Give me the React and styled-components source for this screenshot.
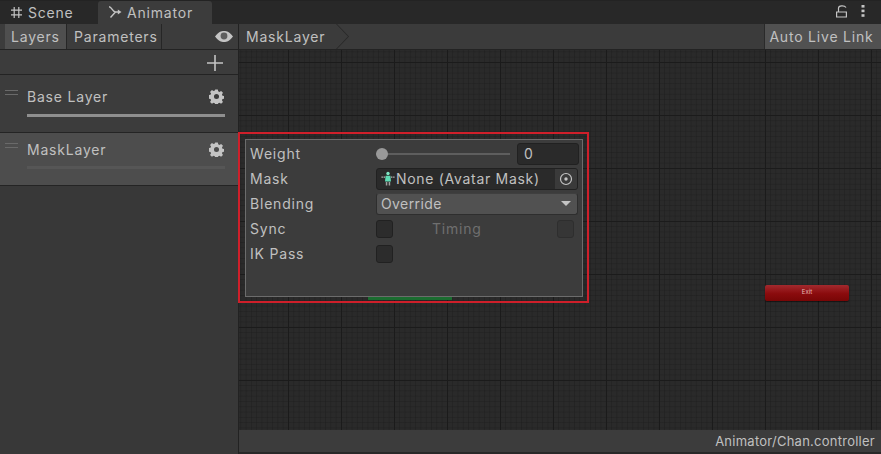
import React from 'react';
import styled, { createGlobalStyle } from 'styled-components';

const Global = createGlobalStyle`
  html, body { margin: 0; padding: 0; background: #282828; }
  body { font-family: Inter, "Liberation Sans", sans-serif; }
`;

const Window = styled.div`
  width: 881px;
  height: 454px;
  display: flex;
  flex-direction: column;
  overflow: hidden;
  color: #c0c0c0;
  font-size: 14px;
  letter-spacing: 0.8px;
`;

const TabBar = styled.div`
  height: 24px;
  flex: none;
  display: flex;
  background: #282828;
  box-sizing: border-box;
  border-top: 1px solid #232323;
`;

const Tab = styled.div`
  display: flex;
  align-items: center;
  gap: 5px;
  height: 23px;
  box-sizing: border-box;
  padding: ${(p) => (p.$active ? '0 0 0 11px' : '0 0 0 10px')};
  width: ${(p) => p.$w}px;
  background: ${(p) => (p.$active ? '#3c3c3c' : 'transparent')};
  border-radius: 3px 3px 0 0;
  margin-left: ${(p) => (p.$active ? 0 : 0)}px;
`;

const TabTools = styled.div`
  margin-left: auto;
  display: flex;
  align-items: center;
  gap: 14px;
  padding-right: 16px;
  height: 20px;
`;

const Body = styled.div`
  flex: 1;
  display: flex;
  min-height: 0;
`;

const Side = styled.div`
  width: 239px;
  flex: none;
  display: flex;
  flex-direction: column;
  background: #383838;
  border-right: 1px solid #222;
  box-sizing: border-box;
`;

const SideTabs = styled.div`
  height: 26px;
  flex: none;
  display: flex;
  background: #3c3c3c;
  border-bottom: 1px solid #232323;
  box-sizing: border-box;
  padding-left: 5px;
  align-items: stretch;
`;

const SideTab = styled.div`
  display: flex;
  align-items: center;
  padding-left: ${(p) => (p.$active ? 6 : 7)}px;
  width: ${(p) => p.$w}px;
  background: ${(p) => (p.$active ? '#4f4f4f' : '#3c3c3c')};
  border-right: 1px solid #262626;
  box-sizing: border-box;
`;

const EyeWrap = styled.div`
  margin-left: auto;
  display: flex;
  align-items: center;
  padding-right: 5px;
`;

const AddRow = styled.div`
  height: 25px;
  flex: none;
  display: flex;
  align-items: center;
  justify-content: flex-end;
  padding: 1px 15px 0 0;
  background: #3c3c3c;
  border-bottom: 1px solid #232323;
  box-sizing: border-box;
`;

const LayerRow = styled.div`
  height: ${(p) => (p.$selected ? 53 : 58)}px;
  flex: none;
  position: relative;
  box-sizing: border-box;
  padding: ${(p) => (p.$selected ? 6 : 11)}px 14px 0 27px;
  background: ${(p) => (p.$selected ? '#4d4d4d' : '#3c3c3c')};
  border-bottom: 1px solid #242424;
`;

const Grip = styled.div`
  position: absolute;
  left: 5px;
  top: ${(p) => (p.$selected ? 10 : 15)}px;
  width: 13px;
  height: 3px;
  border-top: 1px solid #6a6a6a;
  border-bottom: 1px solid #6a6a6a;
`;

const LayerHead = styled.div`
  display: flex;
  align-items: center;
  justify-content: space-between;
  height: 20px;
`;

const LayerBar = styled.div`
  margin-top: ${(p) => (p.$dim ? 7 : 8)}px;
  height: 3px;
  margin-right: -1px;
  background: ${(p) => (p.$dim ? '#565656' : '#8f8f8f')};
`;

const SideFill = styled.div`
  flex: 1;
  background: #383838;
`;

const Main = styled.div`
  flex: 1;
  min-width: 0;
  display: flex;
  flex-direction: column;
`;

const Crumbs = styled.div`
  height: 26px;
  flex: none;
  display: flex;
  background: #3b3b3b;
  border-bottom: 1px solid #232323;
  box-sizing: border-box;
`;

const Crumb = styled.div`
  position: relative;
  display: flex;
  align-items: center;
  padding-left: 7px;
  width: 97px;
  box-sizing: border-box;

  &::after {
    content: '';
    position: absolute;
    left: 97px;
    top: 0;
    width: 13px;
    height: 100%;
    background: #272727;
    clip-path: polygon(0 0, 1px 0, 13px 50%, 1px 100%, 0 100%, 12px 50%);
  }
`;

const LiveLink = styled.div`
  margin-left: auto;
  width: 117px;
  box-sizing: border-box;
  display: flex;
  align-items: center;
  justify-content: center;
  padding-right: 3px;
  background: #515151;
  border-left: 1px solid #2a2a2a;
`;

const Canvas = styled.div`
  flex: 1;
  min-height: 0;
  position: relative;
  background-color: #2a2a2a;
  background-image:
    linear-gradient(to right, #1b1b1b 1px, transparent 1px),
    linear-gradient(to bottom, #1b1b1b 1px, transparent 1px),
    linear-gradient(to right, rgba(28, 28, 28, 0.4) 1px, transparent 1px),
    linear-gradient(to bottom, rgba(28, 28, 28, 0.4) 1px, transparent 1px);
  background-size: 53px 53px, 53px 53px, 5.3px 5.3px, 5.3px 5.3px;
  background-position: 49px 12px, 49px 12px, 49px 12px, 49px 12px;
`;

const Outline = styled.div`
  position: absolute;
  left: -1px;
  top: 82px;
  width: 351px;
  height: 171px;
  box-sizing: border-box;
  border: 2px solid #cf1f2a;
  padding: 5px 4px 4px 5px;
`;

const Popup = styled.div`
  width: 100%;
  height: 100%;
  box-sizing: border-box;
  position: relative;
  background: #3c3c3c;
  border: 1px solid #6c6c6c;
  padding: 1px 3px 0 4px;
  display: flex;
  flex-direction: column;
`;

const Prop = styled.div`
  height: 25px;
  flex: none;
  display: grid;
  grid-template-columns: 126px 1fr;
  align-items: center;
`;

const Control = styled.div`
  display: flex;
  align-items: center;
  min-width: 0;
`;

const Slider = styled.div`
  flex: none;
  width: 134px;
  height: 2px;
  margin-right: 7px;
  position: relative;
  background: #5e5e5e;
`;

const Thumb = styled.div`
  position: absolute;
  left: 0;
  top: -5px;
  width: 12px;
  height: 12px;
  border-radius: 50%;
  background: #999;
`;

const NumberField = styled.div`
  flex: 1;
  height: 22px;
  box-sizing: border-box;
  background: #2a2a2a;
  border: 1px solid #212121;
  border-radius: 3px;
  padding-left: 6px;
  display: flex;
  align-items: center;
`;

const ObjectField = styled.div`
  flex: 1;
  height: 22px;
  margin-right: 1px;
  box-sizing: border-box;
  background: #2a2a2a;
  border: 1px solid #212121;
  border-radius: 3px;
  display: flex;
  align-items: center;
  padding-left: 4px;
  gap: 1px;
  white-space: nowrap;
  letter-spacing: 0.7px;
`;

const Picker = styled.div`
  margin-left: auto;
  width: 22px;
  height: 20px;
  flex: none;
  display: flex;
  align-items: center;
  justify-content: center;
  background: #3a3a3a;
  border-radius: 0 2px 2px 0;
`;

const Dropdown = styled.div`
  flex: 1;
  height: 22px;
  margin-right: 1px;
  box-sizing: border-box;
  background: #515151;
  border: 1px solid #2e2e2e;
  border-top-color: #3f3f3f;
  border-radius: 3px;
  padding: 0 6px 0 4px;
  display: flex;
  align-items: center;
  justify-content: space-between;
  letter-spacing: 0.4px;
`;

const Caret = styled.div`
  width: 0;
  height: 0;
  border-left: 5px solid transparent;
  border-right: 5px solid transparent;
  border-top: 5px solid #c4c4c4;
`;

const Check = styled.div`
  width: 17px;
  height: 18px;
  flex: none;
  box-sizing: border-box;
  background: ${(p) => (p.$dim ? '#363636' : '#2c2c2c')};
  border: 1px solid ${(p) => (p.$dim ? '#2e2e2e' : '#212121')};
  border-radius: 3px;
`;

const Timing = styled.span`
  margin-left: 39px;
  color: #6f6f6f;
`;

const SyncEnd = styled.div`
  margin-left: auto;
  margin-right: 5px;
`;

const GreenBar = styled.div`
  position: absolute;
  left: 122px;
  bottom: -4px;
  width: 84px;
  height: 3px;
  background: #1b6c30;
`;

const ExitNode = styled.div`
  position: absolute;
  left: 526px;
  top: 235px;
  width: 84px;
  height: 16px;
  box-sizing: border-box;
  padding-bottom: 3px;
  border-radius: 2px;
  background: linear-gradient(#a32a2e, #8a0b0d 55%, #780606);
  box-shadow: 0 1px 1px rgba(0, 0, 0, 0.5);
  color: #e6b7b7;
  font-size: 6px;
  letter-spacing: 0;
  display: flex;
  align-items: center;
  justify-content: center;
`;

const Status = styled.div`
  height: 24px;
  flex: none;
  display: flex;
  align-items: center;
  justify-content: flex-end;
  padding-right: 6px;
  background: #3c3c3c;
  border-bottom: 2px solid #282828;
  box-sizing: border-box;
  font-size: 13px;
  letter-spacing: 0.25px;
`;

const GridIcon = () => (
  <svg width="13" height="13" viewBox="0 0 13 13" fill="none" stroke="#c4c4c4" strokeWidth="1.2">
    <path d="M4.200 1v11M8.800 1v11M1 4.200h11M1 8.800h11" />
  </svg>
);

const AnimatorIcon = () => (
  <svg width="13" height="13" viewBox="0 0 13 13" fill="none" stroke="#c4c4c4" strokeWidth="1.4">
    <path d="M0 .8c3 0 3 5 6.500 5.200H9M1.500 11.500L6.500 6" />
    <path d="M8.800 3.400l3.700 2.600-3.700 2.600z" fill="#c4c4c4" stroke="none" />
  </svg>
);

const LockIcon = () => (
  <svg width="11" height="13" viewBox="0 0 11 13" fill="none" stroke="#c4c4c4" strokeWidth="1.2">
    <path d="M.6 7h9.800v5H.6zM2.500 7V3.200C2.500 .2 8.500 .2 10 2.500" />
  </svg>
);

const DotsIcon = () => (
  <svg width="4" height="12" viewBox="0 0 4 12" fill="#c4c4c4">
    <rect x="0.500" y="0" width="3" height="2.600" />
    <rect x="0.500" y="4.600" width="3" height="2.600" />
    <rect x="0.500" y="9.200" width="3" height="2.600" />
  </svg>
);

const EyeIcon = () => (
  <svg width="18" height="11" viewBox="0 0 18 11">
    <path d="M0 5.500C3.500 1 6 0 9 0s5.500 1 9 5.500C14.500 10 12 11 9 11S3.500 10 0 5.500z" fill="#c4c4c4" />
    <circle cx="9" cy="5" r="3.400" fill="#5e5e5e" />
  </svg>
);

const PlusIcon = () => (
  <svg width="16" height="16" viewBox="0 0 16 16" stroke="#c4c4c4" strokeWidth="1.600">
    <path d="M8 0v16M0 8h16" />
  </svg>
);

const GearIcon = () => (
  <svg width="15" height="15" viewBox="0 0 16 16">
    <path
      fill="#c4c4c4"
      fillRule="evenodd"
      d="M6.600.5h2.800l.4 2 1.300.6 1.800-1.100 2 2-1.100 1.800.6 1.300 2 .4v2.800l-2 .4-.6 1.300 1.100 1.800-2 2-1.800-1.100-1.300.6-.4 2H6.600l-.4-2-1.300-.6-1.800 1.100-2-2 1.100-1.800-.6-1.300-2-.4V6.600l2-.4.6-1.300L1.100 3.100l2-2 1.800 1.100 1.300-.6zM8 5.300a2.700 2.700 0 1 0 0 5.400 2.700 2.700 0 0 0 0-5.400z"
    />
  </svg>
);

const AvatarIcon = () => (
  <svg width="14" height="16" viewBox="0 0 14 16">
    <circle cx="7" cy="2.500" r="1.700" fill="#7fe6c4" />
    <path d="M4.600 4.800h4.800l.6 5.700H4z" fill="#5fdcb4" />
    <path d="M4.800 11h1.500v3.500H4.800zM7.700 11h1.500v3.500H7.700z" fill="#a0a0a0" />
    <path d="M.5 5.500h1.300v1.200H.5zM2.600 5.500h1.300v1.200H2.600zM10.100 5.500h1.300v1.200h-1.300zM12.200 5.500h1.300v1.200h-1.300z" fill="#c4c4c4" />
  </svg>
);

const TargetIcon = () => (
  <svg width="14" height="14" viewBox="0 0 14 14" fill="none">
    <circle cx="7" cy="7" r="5.500" stroke="#c4c4c4" strokeWidth="1.200" />
    <circle cx="7" cy="7" r="1.700" fill="#c4c4c4" />
  </svg>
);

const Layer = ({ name, selected }) => (
  <LayerRow $selected={selected}>
    <Grip $selected={selected} />
    <LayerHead>
      <span>{name}</span>
      <GearIcon />
    </LayerHead>
    <LayerBar $dim={selected} />
  </LayerRow>
);

export default function App() {
  return (
    <Window>
      <Global />
      <TabBar>
        <Tab $w={98}>
          <GridIcon />
          Scene
        </Tab>
        <Tab $active $w={114}>
          <AnimatorIcon />
          Animator
        </Tab>
        <TabTools>
          <LockIcon />
          <DotsIcon />
        </TabTools>
      </TabBar>
      <Body>
        <Side>
          <SideTabs>
            <SideTab $active $w={62}>Layers</SideTab>
            <SideTab $w={95}>Parameters</SideTab>
            <EyeWrap>
              <EyeIcon />
            </EyeWrap>
          </SideTabs>
          <AddRow>
            <PlusIcon />
          </AddRow>
          <Layer name="Base Layer" />
          <Layer name="MaskLayer" selected />
          <SideFill />
        </Side>
        <Main>
          <Crumbs>
            <Crumb>MaskLayer</Crumb>
            <LiveLink>Auto Live Link</LiveLink>
          </Crumbs>
          <Canvas>
            <Outline>
              <Popup>
                <Prop>
                  <span>Weight</span>
                  <Control>
                    <Slider>
                      <Thumb />
                    </Slider>
                    <NumberField>0</NumberField>
                  </Control>
                </Prop>
                <Prop>
                  <span>Mask</span>
                  <Control>
                    <ObjectField>
                      <AvatarIcon />
                      None (Avatar Mask)
                      <Picker>
                        <TargetIcon />
                      </Picker>
                    </ObjectField>
                  </Control>
                </Prop>
                <Prop>
                  <span>Blending</span>
                  <Control>
                    <Dropdown>
                      Override
                      <Caret />
                    </Dropdown>
                  </Control>
                </Prop>
                <Prop>
                  <span>Sync</span>
                  <Control>
                    <Check />
                    <Timing>Timing</Timing>
                    <SyncEnd>
                      <Check $dim />
                    </SyncEnd>
                  </Control>
                </Prop>
                <Prop>
                  <span>IK Pass</span>
                  <Control>
                    <Check />
                  </Control>
                </Prop>
                <GreenBar />
              </Popup>
            </Outline>
            <ExitNode>Exit</ExitNode>
          </Canvas>
          <Status>Animator/Chan.controller</Status>
        </Main>
      </Body>
    </Window>
  );
}
